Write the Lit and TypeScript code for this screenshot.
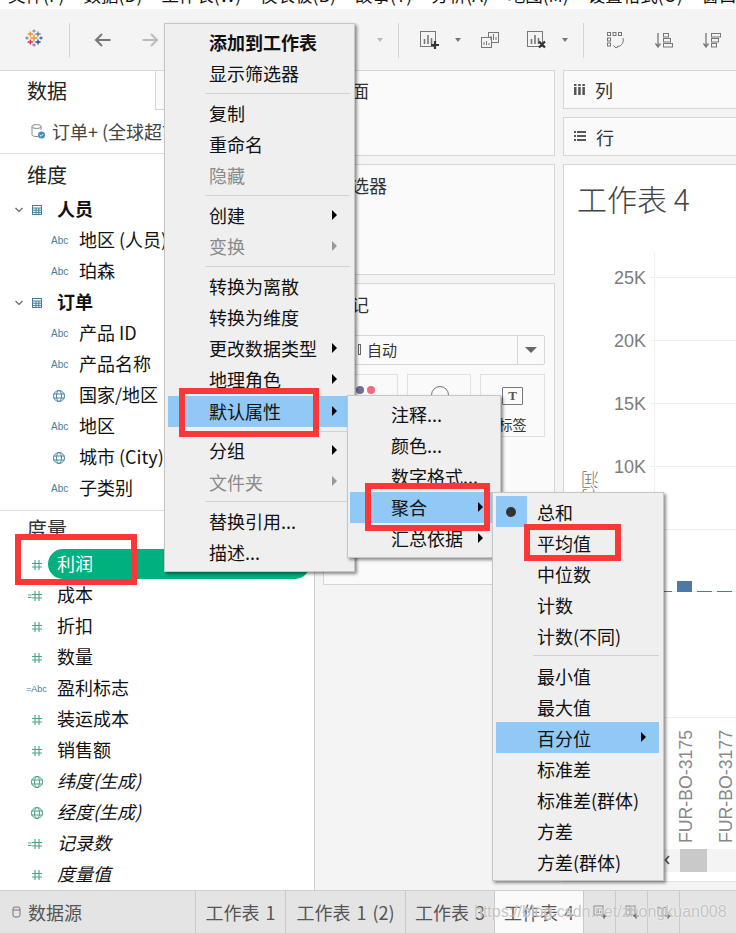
import { LitElement, html, css, svg } from "lit";
import { customElement } from "lit/decorators.js";

type Item = { t?: string; sep?: boolean; off?: boolean; sub?: boolean; hi?: boolean; bold?: boolean };
const T = (t: string, o: Partial<Item> = {}): Item => ({ t, ...o });
const SEP: Item = { sep: true };

const MAIN: Item[] = [
  T("添加到工作表", { bold: true }), T("显示筛选器"), SEP,
  T("复制"), T("重命名"), T("隐藏", { off: true }), SEP,
  T("创建", { sub: true }), T("变换", { off: true, sub: true }), SEP,
  T("转换为离散"), T("转换为维度"), T("更改数据类型", { sub: true }), T("地理角色", { sub: true }),
  T("默认属性", { sub: true, hi: true }), SEP,
  T("分组", { sub: true }), T("文件夹", { off: true, sub: true }), SEP,
  T("替换引用..."), T("描述..."),
];
const SUB1: Item[] = [T("注释..."), T("颜色..."), T("数字格式..."), T("聚合", { sub: true, hi: true }), T("汇总依据", { sub: true })];
const SUB2: Item[] = [
  T("总和"), T("平均值"), T("中位数"), T("计数"), T("计数(不同)"), SEP,
  T("最小值"), T("最大值"), T("百分位", { sub: true, hi: true }), T("标准差"), T("标准差(群体)"), T("方差"), T("方差(群体)"),
];
const TABS: [string, number][] = [["工作表 1", 90], ["工作表 1 (2)", 120], ["工作表 3", 89], ["工作表 4", 89]];
const TICKS: [number, string][] = [[112, "25K"], [175, "20K"], [238, "15K"], [301, "10K"]];
const BARS = [[100, 426, 8, 1], [113, 416, 15, 11], [133, 426, 15, 1], [153, 426, 15, 1]];
const LOGO: [number, number, number, string][] = [
  [10, 10, 3.6, "#f28e2b"], [6.3, 6, 2.6, "#f28e2b"], [14, 6, 2.6, "#5b879b"], [6.3, 14, 2.6, "#e8274b"],
  [14, 14, 2.6, "#1f4e8c"], [10, 3, 1.6, "#7f9db9"], [10, 17, 1.6, "#7f8fb0"], [3, 10, 1.6, "#6f9aa8"], [17, 10, 1.6, "#4a6b9c"],
];

const globe = (c: string) => html`<svg width="16" height="16" viewBox="0 0 16 16" fill="none" stroke=${c} stroke-width="1"><circle cx="8" cy="8" r="5.5"/><ellipse cx="8" cy="8" rx="2.500" ry="5.5"/><path d="M2.500 6h11M2.500 10h11"/></svg>`;
const hash = (eq = false) => html`<svg width="24" height="14" viewBox="0 0 24 14" fill="none" stroke="#4aa383" stroke-width="1.100"><path d="M15 2v10M19 2v10M12 5.500h10M12 9h10"/>${eq ? svg`<path d="M8 6h3.500M8 8.500h3.500" stroke-width="1"/>` : ""}</svg>`;
const table = html`<svg width="12" height="12" viewBox="0 0 12 12" fill="none" stroke="#3f7f9c" stroke-width="1"><rect x="1.500" y="1.500" width="9" height="9"/><path d="M1.500 4h9M1.500 6.200h9M1.500 8.400h9M5 4v6.500M7.800 4v6.500"/></svg>`;
const chev = html`<svg width="10" height="8" viewBox="0 0 10 8" fill="none" stroke="#666" stroke-width="1.200"><path d="M1.500 2l3.500 3.500L8.500 2"/></svg>`;
const caret = (cls: string, c = "#777") => html`<svg class="tool ${cls}" width="6" height="4" viewBox="0 0 6 4"><path d="M0 0h6L3 4z" fill=${c}/></svg>`;

@customElement("app-root")
export class AppRoot extends LitElement {
  static styles = css`
    :host { display: block; width: 736px; height: 933px; overflow: hidden; position: relative; background: #f4f4f4;
      font-family: "Noto Sans CJK SC", "Liberation Sans", sans-serif; font-size: 18px; color: #111; }
    * { box-sizing: border-box; }
    .page { display: flex; flex-direction: column; height: 933px; }
    .menubar { height: 9px; flex: none; background: #fff; display: flex; gap: 19px; padding-left: 8px; align-items: flex-end; overflow: hidden; font-size: 17.5px; line-height: 18px; white-space: nowrap; }
    .menubar span { position: relative; top: -5px; flex: none; }
    .toolbar { height: 61px; flex: none; background: #f4f4f4; display: flex; align-items: center; }
    .logo { margin-left: 24px; width: 20px; height: 20px; flex: none; margin-top: -3px; }
    .vsep { width: 1px; height: 35px; background: #d4d4d4; flex: none; margin-top: 1px; }
    .tool { flex: none; margin-top: 1px; }
    .g15 { margin-left: 15px; } .g20 { margin-left: 20px; } .g21 { margin-left: 21px; } .g23 { margin-left: 23px; }
    .g24 { margin-left: 24px; } .g25 { margin-left: 25px; } .g28 { margin-left: 28px; } .g30 { margin-left: 30px; }
    .g31 { margin-left: 31px; } .g218 { margin-left: 218px; }
    .main { flex: 1; display: flex; min-height: 0; }
    .side { width: 315px; flex: none; background: #fff; border-right: 1px solid #cfcfcf; border-top: 1px solid #d6d6d6; display: flex; flex-direction: column; }
    .datahead { height: 39px; display: flex; align-items: center; padding-left: 27px; font-size: 20px; position: relative; flex: none; color: #222; }
    .datatab { position: absolute; left: 155px; top: 0; bottom: 0; width: 159px; background: #fafafa; border-left: 1px solid #d6d6d6; border-bottom: 1px solid #d6d6d6; }
    .source { height: 44px; border-bottom: 1px solid #e2e2e2; display: flex; align-items: center; padding: 0 0 2px 30px; gap: 6px; color: #444; flex: none; white-space: nowrap; overflow: hidden; }
    .sechead { height: 40px; padding: 1px 0 0 27px; font-size: 20px; display: flex; align-items: center; flex: none; color: #222; }
    .sechead.meas { height: 38px; padding: 0 0 4px 27px; color: #333; }
    .row { height: 31px; flex: none; display: flex; align-items: center; white-space: nowrap; position: relative; }
    .row .ic { width: 24px; margin-left: 51px; flex: none; display: flex; align-items: center; color: #3f7f9c; font-size: 10px; font-family: "Liberation Sans", sans-serif; }
    .row .lab { margin-left: 4px; position: relative; top: -2px; }
    .grp .chev { margin-left: 14px; width: 17px; display: flex; }
    .grp .tb { width: 26px; display: flex; }
    .grp b { font-weight: 700; position: relative; top: -2px; }
    .mrow .ic2 { width: 57px; padding-left: 20px; flex: none; display: flex; align-items: center; color: #3f7f9c; font-size: 9px; font-family: "Liberation Sans", sans-serif; }
    .abc2 { margin-left: 6px; }
    .glob { margin-left: 9px; display: flex; }
    .mrow .it { font-style: italic; }
    .divider { height: 1px; background: #e2e2e2; flex: none; margin-top: 6px; }
    .pill { position: absolute; left: 48px; width: 262px; top: 0; height: 30px; border-radius: 15px; background: #00b180; z-index: 0; }
    .mrow .lab2 { position: relative; z-index: 1; top: -2px; }
    .mrow .sel { color: #fff; }
    .mid { width: 248px; flex: none; display: flex; flex-direction: column; gap: 8px; padding: 0 8px; }
    .right { flex: 1; display: flex; flex-direction: column; gap: 8px; min-width: 0; padding-bottom: 8px; }
    .card { background: #fafafa; border: 1px solid #d6d6d6; flex: none; position: relative; color: #333; padding-left: 9px; }
    .c1 { height: 86px; padding-top: 6px; }
    .c2 { height: 111px; padding-top: 7px; }
    .c3 { height: 302px; padding-top: 7px; }
    .mcombo { position: absolute; left: 10px; right: 9px; top: 51px; height: 30px; border: 1px solid #d6d6d6; border-radius: 2px; font-size: 15px; display: flex; align-items: center; padding: 0 0 2px 23px; gap: 6px; background: #fafafa; }
    .mcombo u { width: 3px; height: 11px; border: 1px solid #666; flex: none; }
    .mcombo i { position: absolute; right: 0; top: 0; bottom: 0; width: 27px; border-left: 1px solid #d6d6d6; }
    .mcombo i::after { content: ""; position: absolute; left: 7px; top: 11px; border: 6px solid transparent; border-top: 6px solid #666; border-bottom: 0; }
    .mbtns { position: absolute; left: 10px; top: 90px; display: grid; grid-template-columns: 64px 64px 65px; gap: 9px; }
    .mbtn { height: 63px; border: 1px solid #e0e0e0; font-size: 14px; display: flex; flex-direction: column; align-items: center; justify-content: flex-end; padding-bottom: 2px; position: relative; overflow: hidden; }
    .dot { position: absolute; top: 11px; width: 8px; height: 8px; border-radius: 50%; }
    .d1 { left: 21px; background: #7a6a96; } .d2 { left: 32px; background: #f6667e; }
    .circ { position: absolute; left: 23px; top: 11px; width: 18px; height: 18px; border: 1px solid #777; border-radius: 50%; }
    .tee { position: absolute; left: 21px; top: 12px; width: 21px; height: 18px; border: 1px solid #777; border-radius: 1px; font: 700 13px "Liberation Serif", serif; text-align: center; line-height: 16px; color: #555; }
    .shelf { height: 39px; background: #fafafa; border: 1px solid #d6d6d6; border-right: 0; display: flex; align-items: center; padding-left: 10px; gap: 10px; flex: none; color: #333; }
    .view { flex: 1; background: #fff; border: 1px solid #e2e2e2; border-right: 0; position: relative; overflow: hidden; border-left: 1px solid #d6d6d6; border-top: 1px solid #d6d6d6; }
    .title { position: absolute; left: 13px; top: 10px; font-size: 30px; line-height: 46px; color: #444; font-weight: 300; white-space: nowrap; }
    .tick { position: absolute; right: 90px; font: 18px/20px "Liberation Sans", sans-serif; color: #7c7c7c; }
    .gl { position: absolute; left: 86px; right: 0; height: 1px; background: #efefef; }
    .gl.full { left: 0; }
    .vl { position: absolute; left: 90px; top: 88px; width: 1px; height: 464px; background: #efefef; }
    .ylab { position: absolute; left: 16px; top: 306px; writing-mode: vertical-rl; transform: rotate(180deg); font-size: 18px; line-height: 20px; color: #777; font-weight: 300; }
    .bar { position: absolute; background: #4e79a7; }
    .xlab { position: absolute; top: 566px; height: 112px; writing-mode: vertical-rl; transform: rotate(180deg); font: 17.700px/20px "Liberation Sans", sans-serif; color: #888; white-space: nowrap; text-align: left; }
    .x1 { left: 112px; } .x2 { left: 152px; }
    .scroll { position: absolute; left: 100px; right: 0; top: 684px; height: 23px; background: #f4f4f4; display: flex; align-items: center; }
    .thumb { position: absolute; left: 16px; top: 0; width: 27px; height: 23px; background: #c9c9c9; }
    .tabs { height: 43px; flex: none; background: #e4e4e4; border-top: 1px solid #cfcfcf; display: flex; color: #555; position: relative; word-spacing: 2px; }
    .tab { height: 42px; flex: none; border-right: 1px solid #c9c9c9; display: flex; align-items: center; justify-content: center; white-space: nowrap; }
    .tab.src { width: 196px; justify-content: flex-start; padding-left: 12px; gap: 7px; }
    .tab.ico { width: 32px; }
    .tab.on { background: #fafafa; }
    .wm { position: absolute; left: 474px; top: 9px; font: 16px/24px "Liberation Sans", sans-serif; word-spacing: 0; color: rgba(190,190,190,.9); text-shadow: 0 0 2px rgba(255,255,255,.9); white-space: nowrap; }
    .menu { position: absolute; background: #efefef; border: 1px solid #c6c6c6; box-shadow: 2px 2px 3px rgba(0,0,0,.45); padding: 3px; z-index: 5; }
    .mi { height: 31.2px; display: flex; align-items: center; white-space: nowrap; position: relative; color: #111; line-height: 31px; }
    .mi.hi { background: #90c8f6; }
    .mi.off { color: #8a8a8a; }
    .mi.bold { font-weight: 700; }
    .mi .arr { position: absolute; top: 10px; width: 0; height: 0; border-left: 5px solid #000; border-top: 5px solid transparent; border-bottom: 5px solid transparent; }
    .mi.off .arr { border-left-color: #999; }
    .msep { height: 8.500px; display: flex; align-items: center; }
    .msep::after { content: ""; height: 1px; width: 100%; background: #d2d2d2; }
    .m0 { left: 164px; top: 23px; width: 191px; height: 549px; }
    .m0 .mi { padding-left: 41px; } .m0 .arr { right: 14px; } .m0 .msep { padding-left: 37px; padding-right: 1px; }
    .m1 { left: 347px; top: 395px; width: 154px; height: 163px; z-index: 6; padding-left: 2px; }
    .m1 .mi { padding-left: 41px; height: 31px; } .m1 .arr { right: 14px; }
    .m2 { left: 492px; top: 492px; width: 172px; height: 389px; z-index: 7; padding-right: 4px; }
    .m2 .mi { padding-left: 41px; height: 31.100px; } .m2 .arr { right: 13px; } .m2 .msep { padding-left: 37px; height: 8px; }
    .m2 .mi > span:first-child { position: relative; top: 1px; }
    .check { position: absolute; left: 0; top: 0; width: 31px; height: 31px; background: #90c8f6; }
    .check::after { content: ""; position: absolute; left: 10px; top: 11px; width: 10px; height: 10px; border-radius: 50%; background: #333; }
    .rb { position: absolute; border: 6.500px solid #fb3737; z-index: 9; pointer-events: none; }
    .r1 { left: 179px; top: 388px; width: 140px; height: 49px; }
    .r2 { left: 15px; top: 534px; width: 122px; height: 51px; }
    .r3 { left: 365px; top: 483px; width: 125px; height: 48px; }
    .r4 { left: 524px; top: 524px; width: 97px; height: 37px; }
    .lchev { position: absolute; left: 0; top: 6px; }
  `;

  private menu(cls: string, items: Item[], extra?: unknown) {
    return html`<div class="menu ${cls}">
      ${items.map((i, n) => i.sep ? html`<div class="msep"></div>` : html`
        <div class="mi ${i.hi ? "hi" : ""} ${i.off ? "off" : ""} ${i.bold ? "bold" : ""}">
          <span>${i.t}</span>${extra && n === 0 ? extra : ""}${i.sub ? html`<span class="arr"></span>` : ""}
        </div>`)}
    </div>`;
  }

  private dim(icon: "a" | "g", t: string) {
    return html`<div class="row"><span class="ic">${icon === "a" ? "Abc" : globe("#4a86a3")}</span><span class="lab">${t}</span></div>`;
  }
  private meas(icon: unknown, t: string, it = false) {
    return html`<div class="row mrow"><span class="ic2">${icon}</span><span class="lab2 ${it ? "it" : ""}">${t}</span></div>`;
  }

  render() {
    const gl = html`<span class="glob">${globe("#4aa383")}</span>`;
    return html`<div class="page">
      <div class="menubar">${["文件(F)", "数据(D)", "工作表(W)", "仪表板(B)", "故事(T)", "分析(A)", "地图(M)", "设置格式(O)", "窗口(N)"].map((m) => html`<span>${m}</span>`)}</div>
      <div class="toolbar">
        <svg class="logo" viewBox="0 0 20 20" fill="none" stroke-width="1.300">
          ${LOGO.map(([x, y, a, c]) => svg`<path d="M${x} ${y - a}v${2 * a}M${x - a} ${y}h${2 * a}" stroke=${c}/>`)}
        </svg>
        <div class="vsep g25"></div>
        <svg class="tool g24" width="17" height="16" viewBox="0 0 17 16" fill="none" stroke="#777" stroke-width="2"><path d="M16.500 8H2M8 2L2 8l6 6"/></svg>
        <svg class="tool g31" width="17" height="16" viewBox="0 0 17 16" fill="none" stroke="#bbb" stroke-width="2"><path d="M.5 8H15M9 2l6 6-6 6"/></svg>
        ${caret("g218", "#bbb")}
        <div class="vsep g15"></div>
        <svg class="tool g21" width="20" height="18" viewBox="0 0 20 18" fill="none" stroke="#777"><rect x=".5" y=".5" width="15" height="15"/><path d="M4.500 13V8M8 13V4M11.500 13V7" stroke-width="1.600"/><path d="M15 10v8M11 14h8" stroke="#333" stroke-width="2.200"/></svg>
        ${caret("g15")}
        <svg class="tool g20" width="18" height="16" viewBox="0 0 18 16" fill="none" stroke="#777"><rect x="7.500" y=".5" width="10" height="10" fill="#f4f4f4"/><rect x=".5" y="5.500" width="10" height="10" fill="#f4f4f4"/><path d="M10 8V4M12.500 8V2M15 8V5M3 13v-3M5.500 13v-4M8 13v-2"/></svg>
        <svg class="tool g28" width="20" height="18" viewBox="0 0 20 18" fill="none" stroke="#777"><rect x=".5" y=".5" width="15" height="15"/><path d="M4.500 13V8M8 13V4M11.500 13V7" stroke-width="1.600"/><path d="M12 10.500l6 6M18 10.500l-6 6" stroke="#333" stroke-width="2.200"/></svg>
        ${caret("g15")}
        <div class="vsep g15"></div>
        <svg class="tool g23" width="18" height="17" viewBox="0 0 18 17" fill="none" stroke="#777"><rect x=".5" y=".5" width="3" height="3"/><rect x="6" y=".5" width="3" height="3"/><rect x="11.500" y=".5" width="3" height="3"/><rect x=".5" y="6" width="3" height="3"/><rect x=".5" y="11" width="3" height="3"/><path d="M16 6c1 4-1 8-6 9M6.500 13.500L9 16l2.500-2"/></svg>
        <svg class="tool g30" width="18" height="15" viewBox="0 0 18 15" fill="none" stroke="#777"><path d="M3 0v13M.5 10.500L3 14l2.500-3.500" stroke-width="1.300"/><rect x="8.500" y=".5" width="5" height="3.500"/><rect x="8.500" y="5.500" width="7" height="3.500"/><rect x="8.500" y="10.500" width="9" height="3.500"/></svg>
        <svg class="tool g30" width="18" height="15" viewBox="0 0 18 15" fill="none" stroke="#777"><path d="M3 0v13M.5 10.500L3 14l2.500-3.500" stroke-width="1.300"/><rect x="8.500" y=".5" width="9" height="3.500"/><rect x="8.500" y="5.500" width="7" height="3.500"/><rect x="8.500" y="10.500" width="5" height="3.500"/></svg>
      </div>
      <div class="main">
        <div class="side">
          <div class="datahead">数据<div class="datatab"></div></div>
          <div class="source">
            <svg width="16" height="16" viewBox="0 0 16 16" fill="none" stroke="#888"><path d="M2 3.500v8c0 1 1.500 2 4 2h2M11 3.500V7"/><ellipse cx="6.500" cy="3.500" rx="4.500" ry="2"/><circle cx="11.500" cy="12" r="3.500" fill="#3f8fb8" stroke="none"/><path d="M9.700 12l1.300 1.300 2.300-2.300" stroke="#fff"/></svg>
            <span>订单+ (全球超市)</span>
          </div>
          <div class="sechead">维度</div>
          <div class="row grp"><span class="chev">${chev}</span><span class="tb">${table}</span><b>人员</b></div>
          ${this.dim("a", "地区 (人员)")}${this.dim("a", "珀森")}
          <div class="row grp"><span class="chev">${chev}</span><span class="tb">${table}</span><b>订单</b></div>
          ${this.dim("a", "产品 ID")}${this.dim("a", "产品名称")}${this.dim("g", "国家/地区")}${this.dim("a", "地区")}${this.dim("g", "城市 (City)")}${this.dim("a", "子类别")}
          <div class="divider"></div>
          <div class="sechead meas">度量</div>
          <div class="row mrow"><div class="pill"></div><span class="ic2">${hash()}</span><span class="lab2 sel">利润</span></div>
          ${this.meas(hash(true), "成本")}${this.meas(hash(), "折扣")}${this.meas(hash(), "数量")}
          ${this.meas(html`<span class="abc2">=Abc</span>`, "盈利标志")}
          ${this.meas(hash(), "装运成本")}${this.meas(hash(), "销售额")}
          ${this.meas(gl, "纬度(生成)", true)}
          ${this.meas(gl, "经度(生成)", true)}
          ${this.meas(hash(true), "记录数", true)}${this.meas(hash(), "度量值", true)}
        </div>
        <div class="mid">
          <div class="card c1">页面</div>
          <div class="card c2">筛选器</div>
          <div class="card c3">标记
            <div class="mcombo"><u></u>自动<i></i></div>
            <div class="mbtns">
              <div class="mbtn"><span class="dot d1"></span><span class="dot d2"></span></div>
              <div class="mbtn"><span class="circ"></span></div>
              <div class="mbtn"><span class="tee">T</span>标签</div>
            </div>
          </div>
        </div>
        <div class="right">
          <div class="shelf"><svg width="11" height="11" viewBox="0 0 11 11" fill="#555"><rect x="0" y="0" width="2.500" height="2"/><rect x="0" y="3" width="2.500" height="8"/><rect x="4.200" y="0" width="2.500" height="2"/><rect x="4.200" y="3" width="2.500" height="8"/><rect x="8.400" y="0" width="2.500" height="2"/><rect x="8.400" y="3" width="2.500" height="8"/></svg><span>列</span></div>
          <div class="shelf"><svg width="12" height="11" viewBox="0 0 12 11" fill="#555"><rect y="0" width="2" height="2"/><rect y="4" width="2" height="2"/><rect y="8" width="2" height="2"/><rect x="3" y="0" width="9" height="2"/><rect x="3" y="4" width="9" height="2"/><rect x="3" y="8" width="9" height="2"/></svg><span>行</span></div>
          <div class="view">
            <div class="title">工作表 4</div>
            <div class="vl"></div>
            ${TICKS.map(([y, l]) => html`<div class="gl" style="top:${y}px"></div><div class="tick" style="top:${y - 9}px">${l}</div>`)}
            <div class="gl" style="top:364px"></div>
            <div class="gl" style="top:426px"></div>
            <div class="gl full" style="top:552px"></div>
            <div class="ylab">利润</div>
            ${BARS.map(([x, y, w, h]) => html`<div class="bar" style="left:${x}px;top:${y}px;width:${w}px;height:${h}px"></div>`)}
            <div class="xlab x1">FUR-BO-3175</div>
            <div class="xlab x2">FUR-BO-3177</div>
            <div class="scroll">
              <svg class="lchev" width="6" height="10" viewBox="0 0 6 10" fill="none" stroke="#555" stroke-width="1.800"><path d="M5 1L1.500 5 5 9"/></svg>
              <div class="thumb"></div>
            </div>
          </div>
        </div>
      </div>
      <div class="tabs">
        <div class="tab src"><svg width="9" height="12" viewBox="0 0 9 12" fill="none" stroke="#777"><rect x="1" y="1" width="7" height="10" rx="2"/><path d="M1 4h7"/></svg>数据源</div>
        ${TABS.map(([t, w], i) => html`<div class="tab ${i === 3 ? "on" : ""}" style="width:${w}px">${t}</div>`)}
        <div class="tab ico"><svg width="14" height="14" viewBox="0 0 14 14" fill="none" stroke="#888"><rect x="1" y="1" width="9" height="9"/><path d="M3.500 8V5M5.500 8V3M7.500 8V6"/><path d="M11 8.500v5M8.500 11h5" stroke="#444" stroke-width="1.300"/></svg></div>
        <div class="tab ico"><svg width="14" height="14" viewBox="0 0 14 14" fill="none" stroke="#888"><rect x="1" y="1" width="9" height="9"/><path d="M1 5h9M5 1v9"/><path d="M11 8.500v5M8.500 11h5" stroke="#444" stroke-width="1.300"/></svg></div>
        <div class="tab ico"><svg width="14" height="14" viewBox="0 0 14 14" fill="none" stroke="#888"><path d="M1 2l4 1.500L9 2v8l-4 1.500L1 10zM5 3.500v8"/><path d="M11 8.500v5M8.500 11h5" stroke="#444" stroke-width="1.300"/></svg></div>
        <div class="wm">https://blog.csdn.net/zhongkuan008</div>
      </div>
    </div>
    ${this.menu("m0", MAIN)}
    ${this.menu("m1", SUB1)}
    ${this.menu("m2", SUB2, html`<span class="check"></span>`)}
    <div class="rb r1"></div>
    <div class="rb r2"></div>
    <div class="rb r3"></div>
    <div class="rb r4"></div>`;
  }
}
